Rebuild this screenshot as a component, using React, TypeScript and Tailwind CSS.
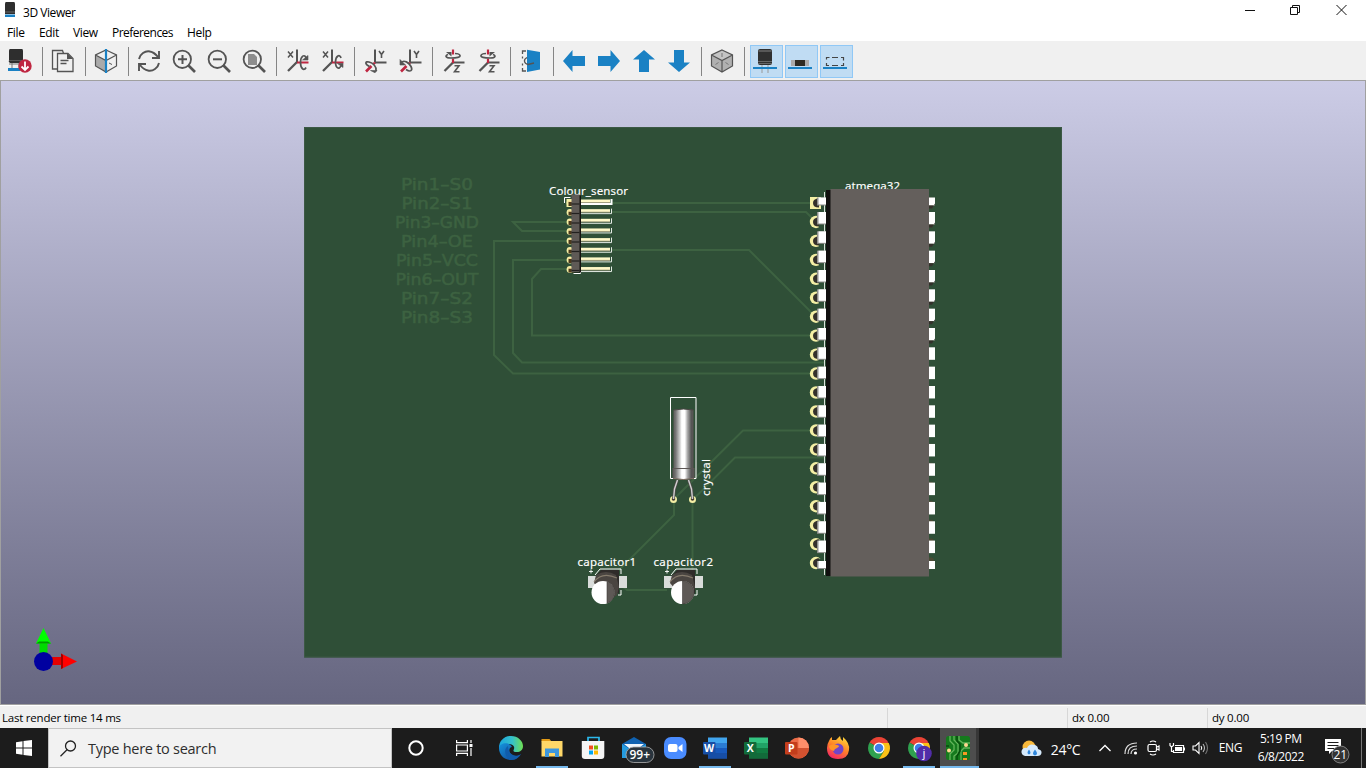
import type { ReactNode } from 'react';

const G = '#545454';
const R = '#bf2641';
const B = '#1a81c4';

function Icon({ children }: { children: ReactNode }) {
  return (
    <svg width="24" height="24" viewBox="0 0 24 24" fill="none" className="block shrink-0">
      {children}
    </svg>
  );
}

function Tool({ children }: { children: ReactNode }) {
  return <div className="w-[35px] shrink-0 pl-1.5">{children}</div>;
}

function ActiveTool({ children }: { children: ReactNode }) {
  return (
    <div className="w-[35px] shrink-0 pl-[3px]">
      <div className="flex h-[33px] w-[33px] items-center border border-[#90c8f6] bg-[#c0dcf3] pl-0.5">{children}</div>
    </div>
  );
}

function Sep() {
  return (
    <div className="w-2 shrink-0 pl-[5px]">
      <div className="h-[29px] w-px bg-[#858585]" />
    </div>
  );
}

function AxisX({ flip = false }: { flip?: boolean }) {
  return (
    <Icon>
      <path d="M12 .5v12.500" stroke={G} strokeWidth="2" />
      <path d="M12 13L3 22" stroke={G} strokeWidth="2.300" />
      <path d="M12 13.500h11.500" stroke={R} strokeWidth="2" />
      <path d="M3 2.500l5 6M8 2.500l-5 6" stroke={G} strokeWidth="1.500" />
      {flip ? (
        <g stroke={G} strokeWidth="1.700">
          <path d="M21 9C20 4.500 15.500 7 15.500 13s3.500 8.500 6 3" />
          <path d="M17.500 14.500H23v4z" fill={G} strokeWidth="0.600" />
        </g>
      ) : (
        <g stroke={G} strokeWidth="1.700">
          <path d="M21 18.500c-2 4-5.500 1-5.500-5s4-9.500 6-4" />
          <path d="M17.500 11H23V6.500z" fill={G} strokeWidth="0.600" />
        </g>
      )}
    </Icon>
  );
}

function AxisY({ flip = false }: { flip?: boolean }) {
  return (
    <Icon>
      <path d="M12 .5v12.500" stroke={G} strokeWidth="2" />
      <path d="M12 13.500h11.500" stroke={G} strokeWidth="2" />
      <path d="M8.500 17L3 22.500" stroke={R} strokeWidth="2.600" />
      <path d="M10.500 15l1.500-1.500" stroke={R} strokeWidth="2.400" />
      <path d="M16 2l2.500 3.500V9M21 2l-2.500 3.500" stroke={G} strokeWidth="1.600" />
      {flip ? (
        <g stroke={G} strokeWidth="1.700">
          <path d="M3 13.500c3-3 8 0 10 4s-.5 6-5 3" />
          <path d="M2 10.500V16h5.500z" fill={G} strokeWidth="0.600" />
        </g>
      ) : (
        <g stroke={G} strokeWidth="1.700">
          <path d="M6.500 17.500C1.500 15 2 12 6 13s8 4.500 7 9" />
          <path d="M7.500 21.500h6.500l-2 2.300z" fill={G} strokeWidth="0.600" />
        </g>
      )}
    </Icon>
  );
}

function AxisZ({ flip = false }: { flip?: boolean }) {
  return (
    <Icon>
      <path d="M12 13.500h11.500" stroke={G} strokeWidth="2" />
      <path d="M12 13.500L3.500 22" stroke={G} strokeWidth="2.300" />
      <path d="M12 .5v5M12 9.500v4.500" stroke={R} strokeWidth="2.200" />
      <path d="M13.500 16.700h4.500l-4.500 6h5" stroke={G} strokeWidth="1.600" />
      <g transform={flip ? 'translate(24 0) scale(-1 1)' : undefined}>
        <path d="M7 5.500C4 6.500 4 9 10 9s9.500-1 9-2.500-3-2-5-2" stroke={G} strokeWidth="1.700" />
        <path d="M5 3h5.500v4.500z" fill={G} />
      </g>
    </Icon>
  );
}

const arrowPath = 'M1 12l9.500-11v6H23v10H10.500v6z';

function Cube({ split = false }: { split?: boolean }) {
  return (
    <Icon>
      <path d="M12 1l10.500 5v11L12 23 1.500 17V6z" fill={split ? '#f0f0f0' : '#b0b0b0'} />
      {!split && <path d="M12 1l10.500 5L12 11.500 1.500 6z" fill="#c4c4c4" />}
      {split && <path d="M1.500 6L12 11.500V23L1.500 17z" fill="#aaa" />}
      <path d="M12 1l10.500 5v11L12 23 1.500 17V6zM1.500 6L12 11.500 22.500 6M12 11.500V23" stroke={G} strokeWidth="1.200" />
      {split ? (
        <>
          <path d="M15 14l3 1.500" stroke={G} strokeWidth="1" />
          <path d="M12 0v24" stroke={B} strokeWidth="2.200" />
        </>
      ) : (
        <path d="M12 4v4M5.500 15.500l3-2M18.500 15.500l-3-2" stroke="#777" strokeWidth="1" />
      )}
    </Icon>
  );
}

function Lens({ children }: { children: ReactNode }) {
  return (
    <Icon>
      <circle cx="10.300" cy="10.300" r="8.700" stroke={G} strokeWidth="1.800" />
      <path d="M16 16l7 7" stroke={G} strokeWidth="2.600" />
      {children}
    </Icon>
  );
}

function Toolbar() {
  return (
    <div className="flex h-[39px] shrink-0 items-center bg-[#f0f0f0] pt-px pl-0.5">
      <Tool>
        <Icon>
          <path d="M2 0h12q1 0 1 2v9q0 2-1 3H2q-2-1-1-3V2q0-2 1-2z" fill="#2e2e2e" />
          <path d="M1 11.500h14" stroke="#555" strokeWidth="1" />
          <path d="M1 15h14M4 14v5M11 14v5" stroke="#777" strokeWidth="1" />
          <path d="M0 19h12v3H0z" fill={B} />
          <circle cx="17" cy="17" r="6.700" fill={R} />
          <path d="M17 12.500v8M13.500 17.500l3.500 3.500 3.500-3.500" stroke="#fff" strokeWidth="1.800" />
        </Icon>
      </Tool>
      <Sep />
      <Tool>
        <Icon>
          <path d="M8 20H1.500V1.500h10l1 3" stroke={G} strokeWidth="1.300" />
          <path d="M6.500 4.500h10.500l5 5v13H6.500z" stroke={G} strokeWidth="1.300" fill="#f0f0f0" />
          <path d="M16 4v6h6z" fill={G} />
          <path d="M9.500 11.500h8M9.500 14.500h6" stroke={G} strokeWidth="1.300" />
        </Icon>
      </Tool>
      <Sep />
      <Tool><Cube split /></Tool>
      <Sep />
      <Tool>
        <Icon>
          <path d="M2 10C3 5 8 1.500 13 2.500c4 .7 6 3 8 5.500M22 14c-1 5-6 8.500-11 7.500-4-.7-6-3-8-5.500" stroke={G} strokeWidth="1.900" />
          <path d="M22 2v7h-7M2 22v-7h7" stroke={G} strokeWidth="1.900" />
        </Icon>
      </Tool>
      <Tool><Lens><path d="M6 10.300h9M10.500 6v9" stroke={G} strokeWidth="2" /></Lens></Tool>
      <Tool><Lens><path d="M6 10.300h9" stroke={G} strokeWidth="2" /></Lens></Tool>
      <Tool><Lens><path d="M6 5h6l3 3v8H6z" fill="#8d8d8d" /></Lens></Tool>
      <Sep />
      <Tool><AxisX /></Tool>
      <Tool><AxisX flip /></Tool>
      <Sep />
      <Tool><AxisY /></Tool>
      <Tool><AxisY flip /></Tool>
      <Sep />
      <Tool><AxisZ /></Tool>
      <Tool><AxisZ flip /></Tool>
      <Sep />
      <Tool>
        <Icon>
          <path d="M8 .7l13 2.300v17.500L8 23z" fill={B} />
          <path d="M7 2H3.500v3M3.500 7.500v2M3.500 14.500v2M3.500 19v3H7" stroke={G} strokeWidth="1.300" />
          <path d="M8 8.500c-4 2-3 6 1 7l6-1.500" stroke={G} strokeWidth="1.300" />
        </Icon>
      </Tool>
      <Sep />
      <Tool><Icon><path d={arrowPath} fill={B} /></Icon></Tool>
      <Tool><Icon><path d={arrowPath} fill={B} transform="rotate(180 12 12)" /></Icon></Tool>
      <Tool><Icon><path d={arrowPath} fill={B} transform="rotate(90 12 12)" /></Icon></Tool>
      <Tool><Icon><path d={arrowPath} fill={B} transform="rotate(270 12 12)" /></Icon></Tool>
      <Sep />
      <Tool><Cube /></Tool>
      <Sep />
      <ActiveTool>
        <Icon>
          <path d="M7 0h10q2 0 2 2v12q0 2-2 2H7q-2 0-2-2V2q0-2 2-2z" fill="#303030" />
          <path d="M5.500 2h13" stroke="#666" strokeWidth="1.500" />
          <path d="M5 12.500h14M5 14.500h14" stroke="#666" strokeWidth="1" />
          <path d="M9 16v8M15 16v8" stroke="#999" strokeWidth="1" />
          <path d="M0 18h24v2H0z" fill={B} />
        </Icon>
      </ActiveTool>
      <ActiveTool>
        <Icon>
          <path d="M3 11h18v6H3z" fill="#aaa" />
          <path d="M7 11h10v6H7z" fill="#2e2a22" />
          <path d="M0 18h24v2H0z" fill={B} />
        </Icon>
      </ActiveTool>
      <ActiveTool>
        <Icon>
          <path d="M3.500 10.500V8.500h3M9 8.500h6M18 8.500h2.500v3M20.500 14v2.500h-2.500M15 16.500H9M6 16.500H3.500v-2.500" stroke="#444" strokeWidth="1.200" />
          <path d="M0 18h24v2H0z" fill={B} />
        </Icon>
      </ActiveTool>
    </div>
  );
}

const traces = [
  'M612 203H812',
  'M612 212H806L816 222',
  'M568 222H513L522 231H568',
  'M568 241H494V355L513 373.500H812',
  'M568 260H513V353L522 362.500H824',
  'M568 269H541L532 279V335.500H812',
  'M612 250H749L814 315',
  'M812 430.500H743L674 499V515L618 571',
  'M824 457.500H735L692.500 500V570',
  'M622 586L627 590H667',
];

const pinLabels = ['Pin1–S0', 'Pin2–S1', 'Pin3–GND', 'Pin4–OE', 'Pin5–VCC', 'Pin6–OUT', 'Pin7–S2', 'Pin8–S3'];
const pinWidths = [72, 71, 84, 72, 82, 83, 72, 72];

function Capacitor({ x, cx, split }: { x: number; cx: number; split: number }) {
  return (
    <g>
      <g transform={`translate(${x} 0)`}>
        <path d="M588 576h39v12h-39z" fill="#d9dcda" />
        <path d="M596 576l5-6h18v24" fill="#2f2c2a" />
        <path d="M595 575l5-6h21v5M621 590v5h-3" stroke="#fff" strokeWidth="1" fill="none" />
        <path d="M589 571.500h4M591 569.500v4" stroke="#fff" strokeWidth="0.900" />
        <path d="M594 583l2-8q10-6 20 0l3 12-2 8-8 6z" fill="#4a4541" />
        <path d="M594 582q8-11 23-4" stroke="#857b6c" strokeWidth="1.200" fill="none" />
      </g>
      <circle cx={cx} cy="592.500" r="11.500" fill="#fff" />
      <path d={split === cx ? `M${cx} 581a11.500 11.500 0 0 1 0 23z` : `M${split} 581.700a11.500 11.500 0 0 1 0 21.600z`} fill="#5e5956" stroke="#3d3936" strokeWidth="0.600" />
    </g>
  );
}

function pinRow(i: number) {
  if (i === 0) return { y: 197.5, h: 8 };
  if (i === 19) return { y: 561, h: 8 };
  return { y: 212 + 19.33 * (i - 1), h: 12.5 };
}

function Board() {
  const rows = Array.from({ length: 20 }, (_, i) => i);
  return (
    <svg width="1364" height="623" viewBox="1 81 1364 623" className="block" fontFamily='"Noto Sans", "DejaVu Sans", sans-serif'>
      <defs>
        <linearGradient id="can" x1="0" x2="1" y1="0" y2="0">
          <stop offset="0" stopColor="#55504f" />
          <stop offset="0.15" stopColor="#777" />
          <stop offset="0.34" stopColor="#d0d0d0" />
          <stop offset="0.42" stopColor="#fff" />
          <stop offset="0.56" stopColor="#fff" />
          <stop offset="0.68" stopColor="#aaa" />
          <stop offset="0.85" stopColor="#555" />
          <stop offset="1" stopColor="#5a5553" />
        </linearGradient>
      </defs>
      <path d="M304 127h758v530.500H304z" fill="#2f4f37" />
      <path d="M304.500 127.500h757v529.500h-757z" fill="none" stroke="#3c5845" strokeWidth="1" />
      <g stroke="#3d6241" strokeWidth="2" fill="none">
        {traces.map((d) => <path key={d} d={d} />)}
      </g>
      <g fill="#3d6241" stroke="#3d6241" strokeWidth="0.500" fontSize="15.500" fontFamily='"DejaVu Sans", sans-serif' textAnchor="middle">
        {pinLabels.map((t, i) => (
          <text key={t} x="437" y={190 + i * 18.95} textLength={pinWidths[i]} lengthAdjust="spacingAndGlyphs">{t}</text>
        ))}
      </g>
      <g fill="#fff" stroke="#fff" strokeWidth="0.150" fontSize="11.500">
        <text x="549" y="194.500" textLength="79">Colour_sensor</text>
        <text x="845" y="189.500" textLength="55">atmega32</text>
        <text x="577.500" y="566" textLength="58.500">capacitor1</text>
        <text x="653.500" y="566" textLength="59.500">capacitor2</text>
        <text transform="translate(709.500 496) rotate(-90)" textLength="37">crystal</text>
      </g>

      <path d="M564.500 203v-5.500h6" stroke="#fff" strokeWidth="1" fill="none" />
      <path d="M566.500 199h6v8h-6z" fill="#f4efa5" />
      {rows.slice(0, 8).map((i) => {
        const y = 198.5 + i * 9.65;
        return (
          <g key={i}>
            <circle cx="570" cy={203 + i * 9.5} r="3.400" fill="#f4efa5" />
            <path d={`M568.500 ${202 + i * 9.5}h6v4h-6z`} fill="#4c3a1d" />
            <path d={`M568 ${201.500 + i * 9.5}h4`} stroke="#f4d793" strokeWidth="1" />
            <path d={`M580 ${y + 5.5}h31.500v-5`} stroke={i === 0 ? '#fff' : '#e4ebe4'} strokeWidth={i === 0 ? 2 : 1} fill="none" />
            <path d={`M579 ${y + 1}h31v3h-31z`} fill="#fff9c8" />
            <path d={`M579 ${y + 4}h31`} stroke="#a69f82" strokeWidth="0.800" />
          </g>
        );
      })}
      <path d="M580.500 197v76.500h-7" stroke="#fff" strokeWidth="1" fill="none" />
      <path d="M574 195.500h7v77h-7z" fill="#15120f" />
      <path d="M571.500 194.500h8v77.500h-8z" fill="#5f5a56" />
      {rows.slice(1, 9).map((i) => (
        <path key={i} d={`M571.500 ${194.5 + i * 9.5}h8`} stroke="#22201f" strokeWidth="1.200" />
      ))}

      <path d="M824.500 192v383" stroke="#dce2dc" strokeWidth="1" />
      {rows.map((i) => {
        const p = pinRow(i);
        const cy = 203 + i * 18.95;
        return (
          <g key={i}>
            {i === 0 ? <path d="M810 197h11v12h-11z" fill="#f4efa5" /> : <circle cx="816" cy={cy} r="6.200" fill="#f4efa5" />}
            {i > 0 && <path d={`M817 ${cy - 4.5}h6v10.500h-4z`} fill="#2f4f37" />}
            <path d={`M819 ${cy - 4.5}q-6 0-6 4.500t6 4.500z`} fill="#33302b" />
            <path d={`M817 ${p.y}h9v${p.h}h-9z`} fill="#8f8f8c" />
            <path d={`M818.500 ${p.y}h7.500v${p.h - 1}h-7.500z`} fill="#fff" />
            <path d={`M929 ${cy - 5.5}h3q3 2 2.500 5.500t-2.500 5.500h-3z`} fill="#4a4a34" />
            <path d={`M928 ${p.y}h7v${p.h}h-7z`} fill="#fff" />
            {i < 8 && <path d={`M928 ${p.y + p.h}h7v-2l-3 5h-4z`} fill="#33302b" />}
          </g>
        );
      })}
      <path d="M826 190h6v386h-6z" fill="#11100f" />
      <path d="M830.500 189h98.500v387.500h-98.500z" fill="#645f5c" />

      <path d="M670.500 397.500h25.500v81h-25.500z" stroke="#fff" strokeWidth="1" fill="none" />
      <path d="M673.500 410q10-2 20 0v58l1 1v9q-11 3-22 0v-9l1-1z" fill="url(#can)" />
      <path d="M673.500 410q10-2 20 0" stroke="#4a4644" strokeWidth="1" fill="none" />
      <path d="M672.500 468.500h22" stroke="#5c5654" strokeWidth="1" />
      <path d="M673 478.500q10 2 21 0" stroke="#77655a" strokeWidth="1" fill="none" />
      {[673.5, 692.5].map((x) => (
        <g key={x}>
          <circle cx={x} cy="499.500" r="3.500" fill="#f4efa5" />
          <circle cx={x} cy="499" r="1.800" fill="#443a30" />
        </g>
      ))}
      <path d="M677.500 480l-3 9-1 10M688.500 480l3 9 1 10" stroke="#4e4a48" strokeWidth="2.800" fill="none" />
      <path d="M677.500 480l-3 9-1 10M688.500 480l3 9 1 10" stroke="#d0d0d0" strokeWidth="1.400" fill="none" />

      <Capacitor x={0} cx={603} split={607} />
      <Capacitor x={76} cx={682.5} split={682.5} />

      <path d="M50 657h12v8H50z" fill="#e60000" />
      <path d="M61 653.500v15.500l16-7.500z" fill="#f00" />
      <path d="M61 653.500v15.500l2-1v-13z" fill="#a00000" />
      <path d="M39.500 640h8v14h-8z" fill="#00dc00" />
      <path d="M36 643.500h15L43.500 628z" fill="#0f0" />
      <path d="M36 643.500h15l-3-2h-9z" fill="#009a00" />
      <circle cx="43.500" cy="661.500" r="9.500" fill="#0000a0" />
    </svg>
  );
}

function App24({ children }: { children: ReactNode }) {
  return (
    <svg width="24" height="24" viewBox="0 0 24 24" fill="none" className="block shrink-0 overflow-visible">
      {children}
    </svg>
  );
}

function Task({ children, running = false }: { children: ReactNode; running?: boolean }) {
  return (
    <div className="flex h-full w-[40.8px] shrink-0 flex-col items-center">
      <div className="flex h-[38px] items-center pt-px">{children}</div>
      {running && <div className="h-0.5 w-8 bg-[#76b9ed]" />}
    </div>
  );
}

function Office({ letter, light, mid, dark, tag, round = false }: { letter: string; light: string; mid: string; dark: string; tag: string; round?: boolean }) {
  return (
    <App24>
      {round ? (
        <>
          <circle cx="13.500" cy="12" r="10.500" fill={mid} />
          <path d="M13.500 1.500A10.500 10.500 0 0 1 24 12H13.500z" fill={light} />
          <path d="M3 12h21a10.500 10.500 0 0 1-21 0z" fill={dark} />
        </>
      ) : (
        <>
          <path d="M5 1.500h19V7H5z" fill={light} />
          <path d="M5 7h19v5H5z" fill={mid} />
          <path d="M5 12h19v10.500H5z" fill={dark} />
          <path d="M5 17h19v5.500H5z" fill={tag} />
        </>
      )}
      <rect x="0" y="6" width="12.500" height="12.500" rx="1" fill={tag} />
      <text x="6.200" y="16" textAnchor="middle" fontSize="10.500" fontWeight="700" fill="#fff" fontFamily='"Open Sans", sans-serif'>{letter}</text>
    </App24>
  );
}

function Chrome({ badge = false }: { badge?: boolean }) {
  return (
    <App24>
      <path d="M12 12L2.500 6.500A11 11 0 0 1 21.500 6.500z" fill="#ea4335" />
      <path d="M12 12L2.500 6.500A11 11 0 0 0 12 23l5-8z" fill="#2fa14f" />
      <path d="M12 7h9.800A11 11 0 0 1 12 23l5-8z" fill="#fbc116" />
      <circle cx="12" cy="12" r="5.500" fill="#fff" />
      <circle cx="12" cy="12" r="4.300" fill="#3f7ee8" />
      {badge && (
        <>
          <circle cx="17" cy="17.500" r="7.800" fill="#512da8" />
          <text x="17" y="21" textAnchor="middle" fontSize="11.500" fill="#fff" fontFamily='"Open Sans", sans-serif'>j</text>
        </>
      )}
    </App24>
  );
}

function Taskbar() {
  return (
    <div className="flex h-10 shrink-0 bg-[#1c1c1c] text-white">
      <div className="flex w-12 shrink-0 items-center justify-center">
        <svg width="16" height="16" viewBox="0 0 16 16" fill="#fff">
          <path d="M0 2.200L6.500 1.300V7.500H0zM7.500 1.100L16 0v7.500H7.500zM0 8.500h6.500v6.200L0 13.800zM7.500 8.500H16V16l-8.500-1.100z" />
        </svg>
      </div>
      <div className="flex w-[344px] shrink-0 items-center border border-[#c3c3c3] bg-[#f2f2f2] pl-[11px] text-[#2e2e2e]">
        <svg width="17" height="17" viewBox="0 0 17 17" fill="none" stroke="#222" strokeWidth="1.300">
          <circle cx="10.500" cy="6" r="5" />
          <path d="M7 9.800L.5 16.300" />
        </svg>
        <span className="ml-[11px] pt-0.5 text-[14.5px] tracking-[-0.27px]">Type here to search</span>
      </div>
      <div className="flex w-12 shrink-0 items-center justify-center">
        <svg width="18" height="18" viewBox="0 0 18 18" fill="none"><circle cx="9" cy="9" r="6.700" stroke="#fff" strokeWidth="2" /></svg>
      </div>
      <div className="flex w-[51px] shrink-0 items-center pl-4">
        <svg width="17" height="16" viewBox="0 0 17 16" fill="none" stroke="#fff" strokeWidth="1.200">
          <path d="M.6 0v2.600h10.800V0M.6 16v-2.600h10.800V16M.6 5h10.800v6H.6zM15 0v3M15 8v8" />
          <path d="M13.500 4h3v3h-3z" fill="#fff" stroke="none" />
        </svg>
      </div>
      <Task>
        <App24>
          <defs>
            <linearGradient id="edgeTop" x1="0" x2="1"><stop offset="0" stopColor="#1ba6df" /><stop offset="0.55" stopColor="#35c1cb" /><stop offset="1" stopColor="#6fe052" /></linearGradient>
            <linearGradient id="edgeLow" x1="0" x2="1" y2="1"><stop offset="0" stopColor="#1593dc" /><stop offset="1" stopColor="#103f91" /></linearGradient>
          </defs>
          <path d="M0 12C0 5 5 0 12 0s12 5 12 10c0 4-3 6-6 6-4 0-4-1-3-3 1-3-2-5-6-5-5 0-9 3-9 7z" fill="url(#edgeTop)" />
          <path d="M0 12C1 6 11 6 13 11c-4 0-4 9 4 9 2 0 4-1 5-2-3 5-7 6-10 6C5 24 0 19 0 12z" fill="url(#edgeLow)" />
          <path d="M9 10c-5 3-3 12 3 14 5 0 8-3 10-6-5 4-13 1-13-8z" fill="#105cab" />
        </App24>
      </Task>
      <Task running>
        <App24>
          <path d="M1.500 3h8l2 2.500h-10z" fill="#e39b16" />
          <path d="M1.500 5h21v15.500h-21z" fill="#ffd868" />
          <path d="M5 12.500h14V21h-4v-4H9v4H5z" fill="#3d97dd" />
        </App24>
      </Task>
      <Task>
        <App24>
          <path d="M7 6V1.500h11V6" stroke="#2cb9ec" strokeWidth="1.700" />
          <path d="M.8 5h22.500v15q0 3-3 3H4q-3.200 0-3.200-3z" fill="#f5f5f5" />
          <path d="M8 9.500h4v4H8z" fill="#f25022" /><path d="M13 9.500h4v4h-4z" fill="#7fba00" />
          <path d="M8 14.500h4v4H8z" fill="#00a4ef" /><path d="M13 14.500h4v4h-4z" fill="#ffb900" />
        </App24>
      </Task>
      <Task>
        <App24>
          <path d="M0 8l12-7 12 7v14H0z" fill="#1062b1" />
          <path d="M2 8h20l-10 8z" fill="#f5f9fd" />
          <path d="M0 8l12 8L24 8v14H0z" fill="#249be0" />
          <path d="M4 8h16l-8 6z" fill="#eef6fc" />
          <rect x="4" y="11" width="28" height="15.500" rx="7.700" fill="#29343d" stroke="#b0b0b0" strokeWidth="0.800" />
          <text x="17.800" y="23" textAnchor="middle" fontSize="12" fontWeight="600" fill="#fff" fontFamily='"Open Sans", sans-serif'>99+</text>
        </App24>
      </Task>
      <Task>
        <App24>
          <rect x="1" y="1" width="22.500" height="22" rx="7" fill="#4a8cff" />
          <rect x="5" y="8" width="9.500" height="8" rx="2" fill="#fff" />
          <path d="M15.500 11l4-3v8l-4-3z" fill="#fff" />
        </App24>
      </Task>
      <Task running><Office letter="W" light="#41a5ee" mid="#2b7cd3" dark="#185abd" tag="#174ea6" /></Task>
      <Task><Office letter="X" light="#33c481" mid="#21a366" dark="#107c41" tag="#126b3a" /></Task>
      <Task><Office letter="P" light="#ff8f6b" mid="#ed6c47" dark="#d35230" tag="#c43e1c" round /></Task>
      <Task>
        <App24>
          <defs><linearGradient id="fox" x1="0.8" y1="0" x2="0.300" y2="1"><stop offset="0" stopColor="#ffe13a" /><stop offset="0.5" stopColor="#ff8428" /><stop offset="1" stopColor="#f52565" /></linearGradient></defs>
          <path d="M3 5q1-3 3-4v3q2 0 4 0 2-2 4-4 0 3 3 5V1q7 6 6 13-1 9-11 9Q1 23 1 12q0-4 2-7z" fill="url(#fox)" />
          <circle cx="12" cy="13" r="5.500" fill="#7145c9" />
          <path d="M3 10q4-3 8-1 4 1 0 3-3 1-3 3-5-1-5-5z" fill="#ff9427" />
        </App24>
      </Task>
      <Task><Chrome /></Task>
      <Task running><Chrome badge /></Task>
      <div className="flex w-[39px] shrink-0 flex-col bg-[#373737]">
        <div className="flex h-[38px] w-9 items-center justify-center bg-[#4d4d4d] pt-px">
          <App24>
            <rect width="24" height="24" rx="2.500" fill="#157a1d" />
            <path d="M4 0v5l4 4v5l-4 4v6M8 0v4l4 4v9l-4 3v4M13 0v4l4 3h7M24 12h-6l-3 3v9" stroke="#63b55b" strokeWidth="1.300" />
            <path d="M0 10h3M11 0v5l3 3v7l-3 5v4" stroke="#064d0b" strokeWidth="1.500" />
            <circle cx="20" cy="9" r="2" fill="#ffd891" /><circle cx="3" cy="14.500" r="2" fill="#ffd891" />
            <path d="M17 16h4v3h-4zM17 22h4v2h-4z" fill="#f59a22" />
          </App24>
        </div>
        <div className="h-0.5 bg-[#76b9ed]" />
      </div>
      <div className="flex flex-1 items-center pl-[42px]">
        <svg width="21" height="17" viewBox="0 0 21 17" className="shrink-0">
          <circle cx="8" cy="7" r="6.500" fill="#f8b83a" />
          <path d="M4 16q-4-1-3.500-5Q2 7 6 8q2-5 8-3 3 1 3 4 4 1 3.500 4t-4 3z" fill="#d5e9fb" />
          <path d="M8 9.500q-3 4 0 5 3-1 0-5zM14 9.500q-4 5 0 6 4-1 0-6z" fill="#2d86dc" />
        </svg>
        <span className="ml-[9px] w-[30px] shrink-0 pt-0.5 text-[14px] tracking-[-0.3px]">24°C</span>
        <svg width="12" height="8" viewBox="0 0 12 8" fill="none" className="ml-[18px] shrink-0"><path d="M.5 7L6 1.500 11.500 7" stroke="#fff" strokeWidth="1.300" /></svg>
        <svg width="14" height="14" viewBox="0 0 14 14" fill="none" className="ml-[13px] shrink-0">
          <path d="M1 13Q1 2 13 2M4 13q0-8 9-8M7 13q0-5 6-5" stroke="#ddd" strokeWidth="1.200" />
          <circle cx="11.500" cy="12" r="1.600" fill="#fff" />
        </svg>
        <svg width="13" height="16" viewBox="0 0 13 16" fill="none" stroke="#fff" strokeWidth="1.200" className="ml-[9px] shrink-0">
          <path d="M3 2Q6 0 9 2M3 14q3 2 6 0M10 7l2-1v4l-2-1" /><rect x="1" y="4.500" width="8.500" height="7" rx="1.500" />
        </svg>
        <svg width="16" height="13" viewBox="0 0 16 13" fill="none" stroke="#fff" strokeWidth="1.200" className="ml-[9px] shrink-0">
          <path d="M6 3.500h8.500v7H4.500V8M1 1v2.500L2.500 5 4.500 3.500V1M2.500 5v4.500h2M15.400 5.500v3" /><path d="M6 5h7v4H6z" fill="#fff" stroke="none" />
        </svg>
        <svg width="17" height="14" viewBox="0 0 17 14" fill="none" stroke="#fff" strokeWidth="1.100" className="ml-[7px] shrink-0">
          <path d="M1 5h2.500L7 1.500v11L3.500 9H1zM9 5q1.500 2 0 4" /><path d="M11 3q3 4 0 8" stroke="#bbb" /><path d="M13.500 1q4 6 0 12" stroke="#777" />
        </svg>
        <span className="ml-2.5 w-6 shrink-0 text-[12px] tracking-[-0.4px]">ENG</span>
        <div className="ml-[13px] w-[50px] shrink-0 text-center text-[12px] leading-[18px] tracking-[-0.5px] whitespace-nowrap">
          <div>5:19 PM</div>
          <div>6/8/2022</div>
        </div>
        <svg width="28" height="28" viewBox="0 0 28 28" className="mt-2 ml-[18px] shrink-0">
          <path d="M1 1h16v12H8l-3 3v-3H1z" fill="#fff" />
          <path d="M3.500 4.500h11M3.500 7.500h11M3.500 10.500h7" stroke="#1c1c1c" strokeWidth="1" />
          <circle cx="16.500" cy="16.500" r="8.500" fill="#333" stroke="#999" strokeWidth="0.800" />
          <text x="16.300" y="20.800" textAnchor="middle" fontSize="12" fill="#fff" fontFamily='"Open Sans", sans-serif'>21</text>
        </svg>
      </div>
      <div className="w-[5px] shrink-0 border-l border-[#777]" />
    </div>
  );
}

export default function App() {
  return (
    <div className="flex h-[768px] w-[1366px] flex-col overflow-hidden bg-white font-['Open_Sans','Noto_Sans',sans-serif] text-[12px] text-black">
      <div className="flex h-6 shrink-0 items-center bg-white pl-1">
        <svg width="12" height="16" viewBox="0 0 12 16" className="-mt-1 shrink-0">
          <path d="M2 0h8q1 0 1 2v10H1V2q0-2 1-2z" fill="#2e2e2e" />
          <path d="M1 10h10" stroke="#666" />
          <path d="M1 12.500h10V15H1z" fill={B} />
        </svg>
        <span className="ml-[7px] pt-px tracking-[-0.45px]">3D Viewer</span>
        <div className="ml-auto flex items-center pr-[19px]">
          <svg width="102" height="12" viewBox="0 0 102 12" fill="none" stroke="#111" strokeWidth="1" className="-mt-1">
            <path d="M0 6.500h10M45.500 3.500h7v7h-7zM47.500 3.500v-2h7v7h-2M91.500 1l10 10M101.500 1l-10 10" />
          </svg>
        </div>
      </div>
      <div className="flex h-[17px] shrink-0 items-center bg-white tracking-[-0.35px]">
        <span className="ml-[7px] w-8">File</span>
        <span className="w-[34px]">Edit</span>
        <span className="w-[39px]">View</span>
        <span className="w-[75px] tracking-[-0.53px]">Preferences</span>
        <span>Help</span>
      </div>
      <Toolbar />
      <div className="h-[625px] shrink-0 border border-[#a0a0a0] bg-linear-to-b from-[#cccce6] to-[#666680]">
        <Board />
      </div>
      <div className="flex h-[23px] shrink-0 items-center border-t border-white bg-[#f0f0f0] pt-px text-[11.5px] tracking-[-0.22px]">
        <span className="w-[887px] pl-0.5">Last render time 14 ms</span>
        <div className="flex h-5 w-[180px] border-l border-[#d7d7d7]" />
        <div className="flex h-5 w-[140px] items-center border-l border-[#d7d7d7] pl-1">dx 0.00</div>
        <div className="flex h-5 flex-1 items-center border-l border-[#d7d7d7] pl-1">dy 0.00</div>
      </div>
      <Taskbar />
    </div>
  );
}
